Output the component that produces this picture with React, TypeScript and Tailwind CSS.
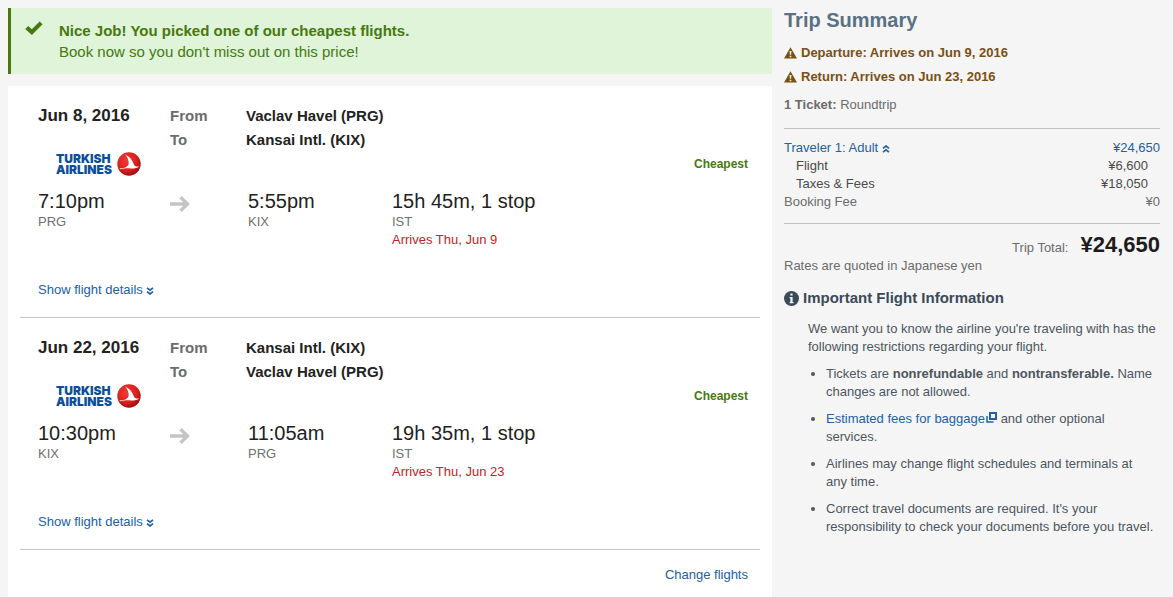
type Flight = {
  date: string;
  from: string;
  to: string;
  departTime: string;
  departCode: string;
  arriveTime: string;
  arriveCode: string;
  duration: string;
  stop: string;
  arrives: string;
};

const flights: Flight[] = [
  {
    date: "Jun 8, 2016",
    from: "Vaclav Havel (PRG)",
    to: "Kansai Intl. (KIX)",
    departTime: "7:10pm",
    departCode: "PRG",
    arriveTime: "5:55pm",
    arriveCode: "KIX",
    duration: "15h 45m, 1 stop",
    stop: "IST",
    arrives: "Arrives Thu, Jun 9",
  },
  {
    date: "Jun 22, 2016",
    from: "Kansai Intl. (KIX)",
    to: "Vaclav Havel (PRG)",
    departTime: "10:30pm",
    departCode: "KIX",
    arriveTime: "11:05am",
    arriveCode: "PRG",
    duration: "19h 35m, 1 stop",
    stop: "IST",
    arrives: "Arrives Thu, Jun 23",
  },
];

const DoubleChevron = ({ className = "" }: { className?: string }) => (
  <svg viewBox="0 0 8 8" className={`inline-block w-2 h-2 align-middle ${className}`} fill="none" stroke="currentColor" strokeWidth="1.7">
    <path d="M1 0.8 L4 3.2 L7 0.8 M1 4.6 L4 7 L7 4.6" />
  </svg>
);

const CheckIcon = () => (
  <svg viewBox="0 0 18 18" className="w-[18px] h-[18px]" fill="currentColor">
    <path d="M0.2 9 L3.2 6 L6.8 9.2 L14.6 1.4 L17.6 4.3 L6.9 15 Z" />
  </svg>
);

const WarningIcon = () => (
  <svg viewBox="0 0 13 12" className="w-[13px] h-3">
    <path d="M6.5 0.2 L13 11.6 H0 Z" fill="currentColor" />
    <path d="M5.6 4 H7.4 L7.1 7.8 H5.9 Z M5.7 8.7 H7.3 V10.2 H5.7 Z" fill="#f5f5f5" />
  </svg>
);

const InfoIcon = () => (
  <svg viewBox="0 0 15 15" className="w-[15px] h-[15px]">
    <circle cx="7.5" cy="7.5" r="7.5" fill="currentColor" />
    <path d="M6.4 2.6 H8.6 V4.6 H6.4 Z M5.6 5.9 H8.6 V11 H9.5 V12.2 H5.6 V11 H6.4 V7.2 H5.6 Z" fill="#f5f5f5" />
  </svg>
);

const AirlineLogo = () => (
  <div className="flex items-center gap-1 h-6 ml-[18px] text-[#0b4f9a]">
    <div className="w-[57px] text-[12px] leading-[11px] font-black font-[Inter,sans-serif]">
      <p>TURKISH</p>
      <p>AIRLINES</p>
    </div>
    <svg viewBox="0 0 24 24" className="w-6 h-6">
      <defs>
        <radialGradient id="ball" cx="0.4" cy="0.35" r="0.65">
          <stop offset="0" stopColor="#f23a35" />
          <stop offset="0.65" stopColor="#dc211f" />
          <stop offset="1" stopColor="#9c1114" />
        </radialGradient>
      </defs>
      <circle cx="12" cy="12" r="11.7" fill="url(#ball)" />
      <path
        d="M8 2.4 C10.8 5.4 12.2 8.8 11.6 12 C11 14.2 9.2 15.4 6.4 15.9 L2.6 16.6 L3.2 17.3 C7.5 16.2 11 16.1 14 16.5 C17 16.7 20 16 22.4 14.4 C19.4 14.9 17.4 14.2 16.6 12 C15.4 8.2 13 4.6 8 2.4 Z"
        fill="#fff"
      />
    </svg>
  </div>
);

const FlightCard = ({ flight }: { flight: Flight }) => (
  <section className="border-b border-[#c4c4c4] pt-[18px] pb-[18px] pl-[18px] pr-3">
    <div className="grid grid-cols-[132px_76px_1fr] leading-6 text-[15px] font-bold">
      <h2 className="text-[17px] row-span-2 leading-6">{flight.date}</h2>
      <span className="text-[#6b6b6b]">From</span>
      <span>{flight.from}</span>
      <span className="text-[#6b6b6b]">To</span>
      <span>{flight.to}</span>
    </div>
    <div className="flex items-center justify-between">
      <AirlineLogo />
      <p className="text-[12px] font-bold text-[#46790f]">Cheapest</p>
    </div>
    <div className="grid grid-cols-[132px_78px_144px_1fr] mt-[14px] text-[13px] leading-[18px] text-[#6f6f6f]">
      <div>
        <p className="text-xl leading-[23px] text-[#222]">{flight.departTime}</p>
        <p>{flight.departCode}</p>
      </div>
      <svg viewBox="0 0 20 16" className="w-5 h-4 mt-[6px]" fill="none" stroke="#c4c4c4" strokeWidth="3.4">
        <path d="M0 8 H17 M10.5 1.2 L17.6 8 L10.5 14.8" />
      </svg>
      <div>
        <p className="text-xl leading-[23px] text-[#222]">{flight.arriveTime}</p>
        <p>{flight.arriveCode}</p>
      </div>
      <div>
        <p className="text-xl leading-[23px] text-[#222]">{flight.duration}</p>
        <p>{flight.stop}</p>
        <p className="text-[#c9201f]">{flight.arrives}</p>
      </div>
    </div>
    <button className="block mt-8 text-[13px] leading-[18px] text-[#2360a5]">
      Show flight details <DoubleChevron />
    </button>
  </section>
);

const TripSummary = () => (
  <aside className="w-[376px] shrink-0 text-[13px] leading-[18px] text-[#6b6b6b]">
    <h2 className="text-xl leading-6 font-bold text-[#5a7184]">Trip Summary</h2>
    <div className="mt-[9px] leading-6 font-bold text-[#7a5013]">
      <p className="flex items-center gap-1">
        <WarningIcon /> Departure: Arrives on Jun 9, 2016
      </p>
      <p className="flex items-center gap-1">
        <WarningIcon /> Return: Arrives on Jun 23, 2016
      </p>
    </div>
    <p className="mt-[7px]">
      <b>1 Ticket:</b> Roundtrip
    </p>
    <div className="mt-[14px] pt-[10px] pb-3 border-y border-[#c4c4c4]">
      <table className="w-full">
        <tbody>
          <tr className="text-[#2360a5]">
            <td>
              <button className="block">
                Traveler 1: Adult <DoubleChevron className="rotate-180" />
              </button>
            </td>
            <td className="text-right">¥24,650</td>
          </tr>
          <tr className="text-[#4a4a4a]">
            <td className="pl-3">Flight</td>
            <td className="text-right pr-3">¥6,600</td>
          </tr>
          <tr className="text-[#4a4a4a]">
            <td className="pl-3">Taxes &amp; Fees</td>
            <td className="text-right pr-3">¥18,050</td>
          </tr>
          <tr>
            <td>Booking Fee</td>
            <td className="text-right">¥0</td>
          </tr>
        </tbody>
      </table>
    </div>
    <p className="flex items-baseline justify-end gap-3 mt-[9px]">
      Trip Total: <b className="text-[22px] leading-6 text-[#1c1c1c]">¥24,650</b>
    </p>
    <p>Rates are quoted in Japanese yen</p>
    <h3 className="flex items-center gap-1 mt-[11px] text-[15px] leading-6 font-bold text-[#3b4a59]">
      <InfoIcon /> Important Flight Information
    </h3>
    <div className="mt-[10px] pl-6 text-[#4c5560]">
      <p>We want you to know the airline you're traveling with has the following restrictions regarding your flight.</p>
      <ul className="list-disc mt-[9px] pl-[18px] pr-[6px] space-y-[9px]">
        <li>
          Tickets are <b>nonrefundable</b> and <b>nontransferable.</b> Name changes are not allowed.
        </li>
        <li>
          <a href="#baggage" className="text-[#2360a5]">
            Estimated fees for baggage
            <svg viewBox="0 0 11 11" className="inline-block w-[11px] h-[11px] ml-px align-baseline" fill="none" stroke="currentColor">
              <path d="M4 1 H10 V7 H4 Z" strokeWidth="2" />
              <path d="M1 4 V10 H7.5" strokeWidth="1.5" />
            </svg>
          </a>{" "}
          and other optional services.
        </li>
        <li>Airlines may change flight schedules and terminals at any time.</li>
        <li>Correct travel documents are required. It's your responsibility to check your documents before you travel.</li>
      </ul>
    </div>
  </aside>
);

const App = () => {
  return (
    <div className="min-h-screen flex gap-3 pt-2 pl-2 pr-[13px] bg-[#f5f5f5] text-[#222] font-['Liberation_Sans',Arial,sans-serif]">
      <main className="flex-1 min-w-0 flex flex-col gap-3">
        <div className="flex gap-4 border-l-[3px] border-[#46790f] bg-[#dff4d8] py-3 pl-[14px] text-[15px] leading-[21px] text-[#46790f]">
          <CheckIcon />
          <div>
            <p className="font-bold">Nice Job! You picked one of our cheapest flights.</p>
            <p>Book now so you don't miss out on this price!</p>
          </div>
        </div>
        <div className="flex-1 bg-white px-3">
          {flights.map((flight) => (
            <FlightCard key={flight.date} flight={flight} />
          ))}
          <div className="flex justify-end pt-4 pr-3 text-[13px] leading-[18px]">
            <a href="#change" className="text-[#2360a5]">
              Change flights
            </a>
          </div>
        </div>
      </main>
      <TripSummary />
    </div>
  );
};

export default App;
